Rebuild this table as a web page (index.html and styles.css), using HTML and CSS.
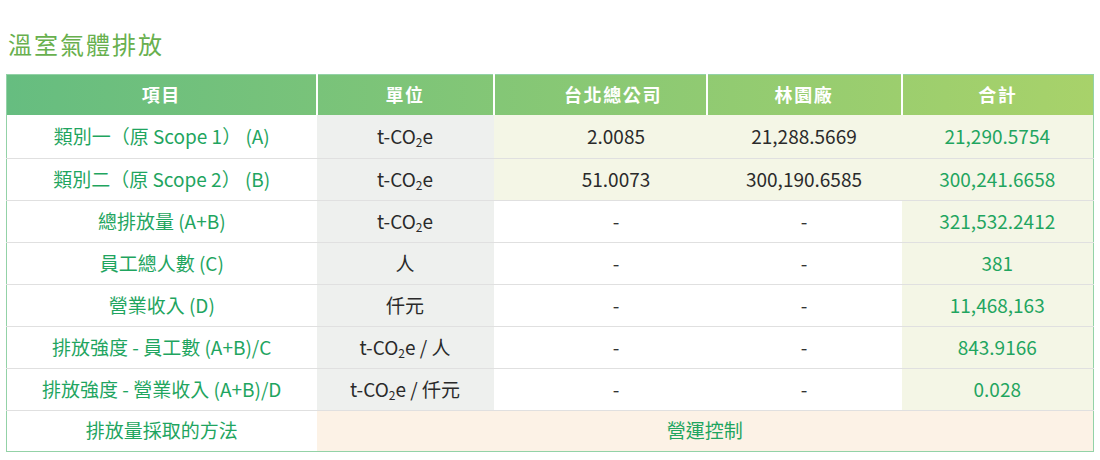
FILE: index.html
```html
<!DOCTYPE html>
<html lang="zh-Hant">
<head>
<meta charset="utf-8">
<link rel="stylesheet" href="styles.css">
</head>
<body>
<div class="wrap">
  <h2 class="title">溫室氣體排放</h2>
  <table class="ghg">
    <colgroup>
      <col class="c1"><col class="c2"><col class="c3"><col class="c4"><col class="c5">
    </colgroup>
    <thead>
      <tr><th>項目</th><th>單位</th><th class="hq">台北總公司</th><th>林園廠</th><th>合計</th></tr>
    </thead>
    <tbody>
      <tr><td class="item">類別一（原 Scope 1） (A)</td><td class="unit">t-CO<sub>2</sub>e</td><td class="tint hq">2.0085</td><td class="tint">21,288.5669</td><td class="total">21,290.5754</td></tr>
      <tr><td class="item">類別二（原 Scope 2） (B)</td><td class="unit">t-CO<sub>2</sub>e</td><td class="tint hq">51.0073</td><td class="tint">300,190.6585</td><td class="total">300,241.6658</td></tr>
      <tr><td class="item">總排放量 (A+B)</td><td class="unit">t-CO<sub>2</sub>e</td><td class="hq">-</td><td>-</td><td class="total">321,532.2412</td></tr>
      <tr><td class="item">員工總人數 (C)</td><td class="unit">人</td><td class="hq">-</td><td>-</td><td class="total">381</td></tr>
      <tr><td class="item">營業收入 (D)</td><td class="unit">仟元</td><td class="hq">-</td><td>-</td><td class="total">11,468,163</td></tr>
      <tr><td class="item">排放強度 - 員工數 (A+B)/C</td><td class="unit">t-CO<sub>2</sub>e / 人</td><td class="hq">-</td><td>-</td><td class="total">843.9166</td></tr>
      <tr><td class="item">排放強度 - 營業收入 (A+B)/D</td><td class="unit">t-CO<sub>2</sub>e / 仟元</td><td class="hq">-</td><td>-</td><td class="total">0.028</td></tr>
      <tr class="last"><td class="item">排放量採取的方法</td><td class="method" colspan="4">營運控制</td></tr>
    </tbody>
  </table>
</div>
</body>
</html>
```

FILE: styles.css
```css
html, body {
  margin: 0;
  padding: 0;
  background: #ffffff;
}
body {
  font-family: "Noto Sans CJK TC", "Noto Sans", sans-serif;
  color: #333333;
}
.wrap {
  padding: 28px 6px 0 6px;
}
.title {
  margin: 0 0 14px 2px;
  font-size: 24px;
  line-height: 32px;
  font-weight: 400;
  letter-spacing: 2px;
  color: #68b04e;
}
.ghg {
  width: 1088px;
  border-collapse: collapse;
  table-layout: fixed;
  border: 1px solid #93d2a7;
  font-size: 19px;
  font-weight: 400;
}
.c1 { width: 310px; }
.c2 { width: 177px; }
.c3 { width: 213px; }
.c4 { width: 195px; }
.c5 { width: 192px; }
.ghg thead tr {
  background: linear-gradient(to right, #66bd80, #a8d26a);
}
.ghg th {
  height: 38px;
  padding: 0 0 2px 0;
  color: #ffffff;
  font-weight: 700;
  font-size: 18px;
  letter-spacing: 1.6px;
  text-align: center;
  border-right: 2px solid #ffffff;
}
.ghg th:last-child {
  border-right: none;
}
.ghg td {
  height: 39px;
  padding: 0 0 2px 0;
  text-align: center;
  vertical-align: middle;
  border-top: 1px solid #e0e0e0;
  line-height: 22px;
}
.ghg tbody tr:first-child td {
  border-top: none;
  height: 41px;
}
.ghg tr.last td {
  height: 38px;
}
.ghg th.hq {
  padding-left: 26px;
}
.ghg td.hq {
  padding-left: 32px;
}
.ghg td.item {
  color: #1fa55f;
}
.ghg td.unit {
  background: #eef0ee;
  color: #2a2a2a;
}
.ghg td.tint {
  background: #f4f6e6;
  color: #2a2a2a;
}
.ghg td.total {
  background: #f4f6e6;
  color: #1fa55f;
}
.ghg td.method {
  background: #fcf2e6;
  color: #1fa55f;
}
.ghg sub {
  font-size: 12px;
  line-height: 0;
  vertical-align: -3px;
}
```
